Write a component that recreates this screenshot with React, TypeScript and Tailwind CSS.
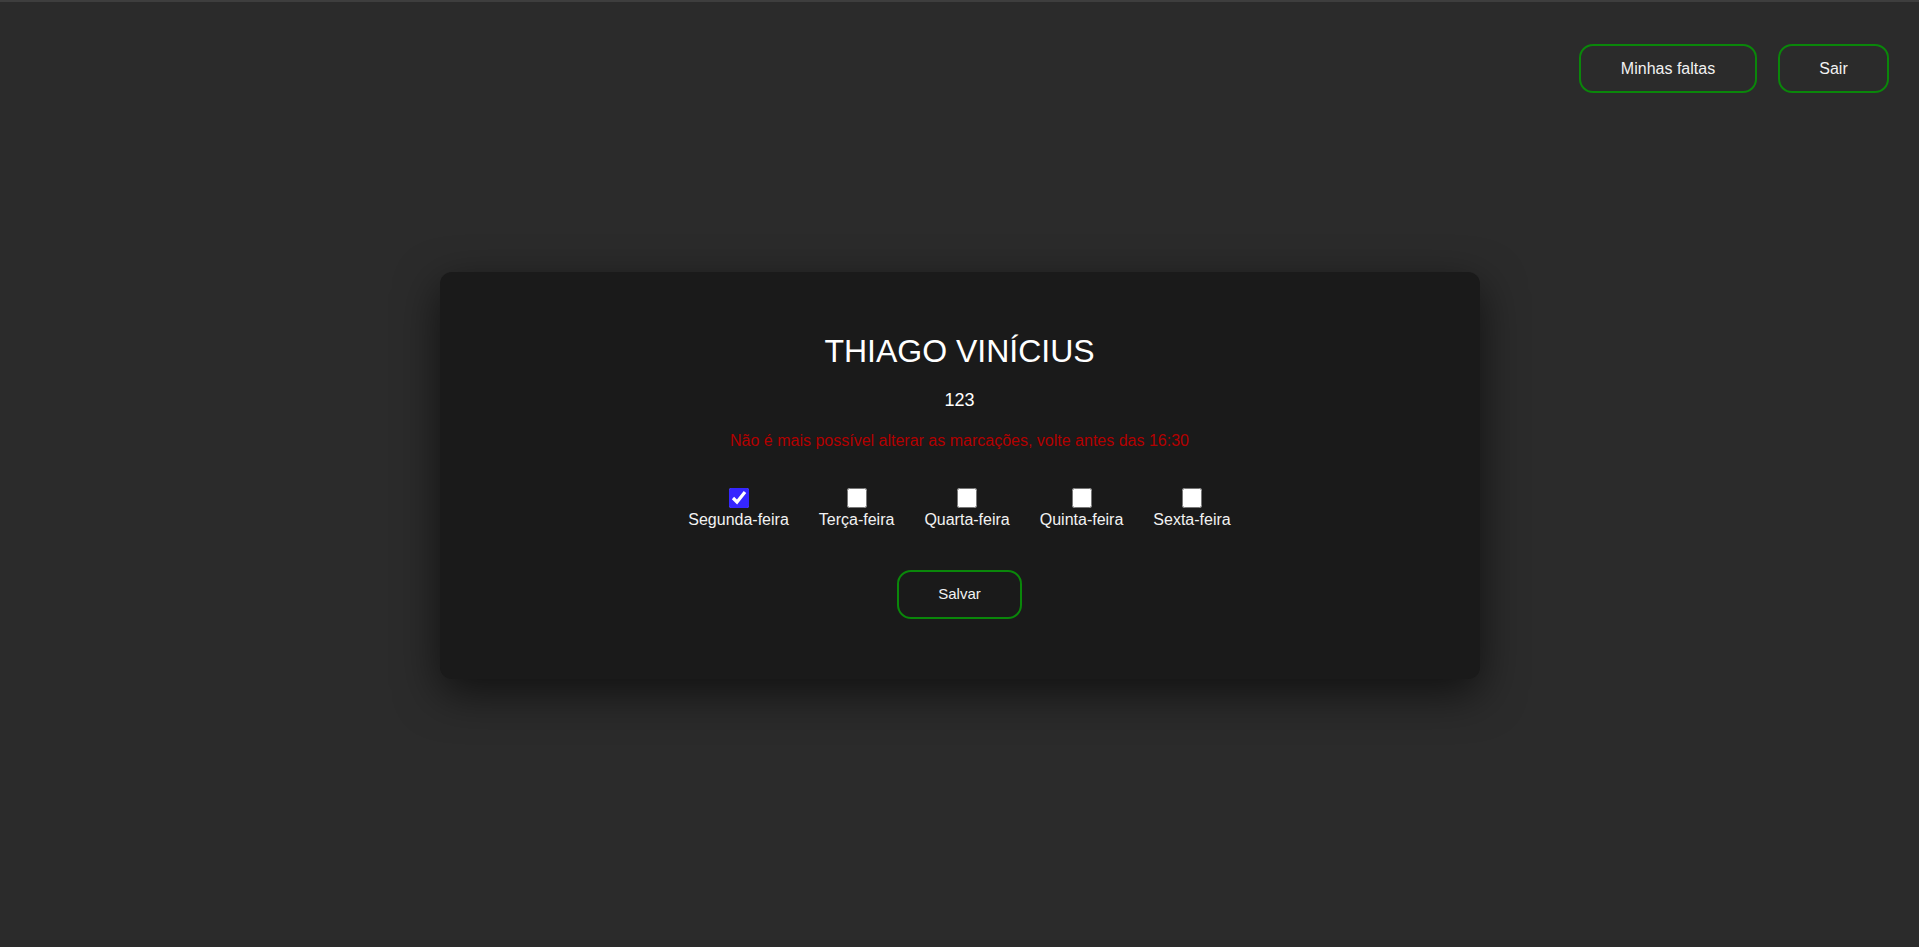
import { useState } from 'react';

const dias = ['Segunda-feira', 'Terça-feira', 'Quarta-feira', 'Quinta-feira', 'Sexta-feira'];

const App = () => {
  const [marcados, setMarcados] = useState<boolean[]>([true, false, false, false, false]);

  const toggle = (i: number) => {
    setMarcados((prev) => prev.map((v, j) => (j === i ? !v : v)));
  };

  return (
    <div
      className="min-h-screen bg-[#2b2b2b] border-t-2 border-[#3e3e3e] text-[#f2f2f2]"
      style={{ fontFamily: '"Liberation Sans", Arial, sans-serif' }}
    >
      {/* Header */}
      <div className="flex justify-end gap-[21px] pt-[42px] pr-[30px]">
        <button className="h-[49px] w-[178px] rounded-[14px] border-2 border-[#0a870a] text-[16px] text-[#f2f2f2]">
          Minhas faltas
        </button>
        <button className="h-[49px] w-[111px] rounded-[14px] border-2 border-[#0a870a] text-[16px] text-[#f2f2f2]">
          Sair
        </button>
      </div>

      {/* Card */}
      <div className="mx-auto mt-[179px] w-[1040px] rounded-[12px] bg-[#1a1a1a] pt-[61px] pb-[60px] flex flex-col items-center shadow-[0_14px_44px_rgba(0,0,0,0.6)]">
        <h1 className="text-[32px] leading-[36px] text-white">THIAGO VINÍCIUS</h1>
        <p className="mt-[20px] text-[18px] leading-[22px] text-white">123</p>
        <p className="mt-[21px] text-[16px] leading-[18px] text-[#b30000]">
          Não é mais possível alterar as marcações, volte antes das 16:30
        </p>

        <div className="mt-[38px] flex gap-[30px]">
          {dias.map((dia, i) => (
            <label key={dia} className="flex flex-col items-center">
              <input
                type="checkbox"
                checked={marcados[i]}
                onChange={() => toggle(i)}
                className="m-0 h-5 w-5 accent-[#3526ff]"
              />
              <span className="mt-[3px] text-[16px] leading-[18px]">{dia}</span>
            </label>
          ))}
        </div>

        <button className="mt-[41px] h-[49px] w-[125px] rounded-[14px] border-2 border-[#0a870a] text-[15px] text-[#f2f2f2]">
          Salvar
        </button>
      </div>
    </div>
  );
};

export default App;
